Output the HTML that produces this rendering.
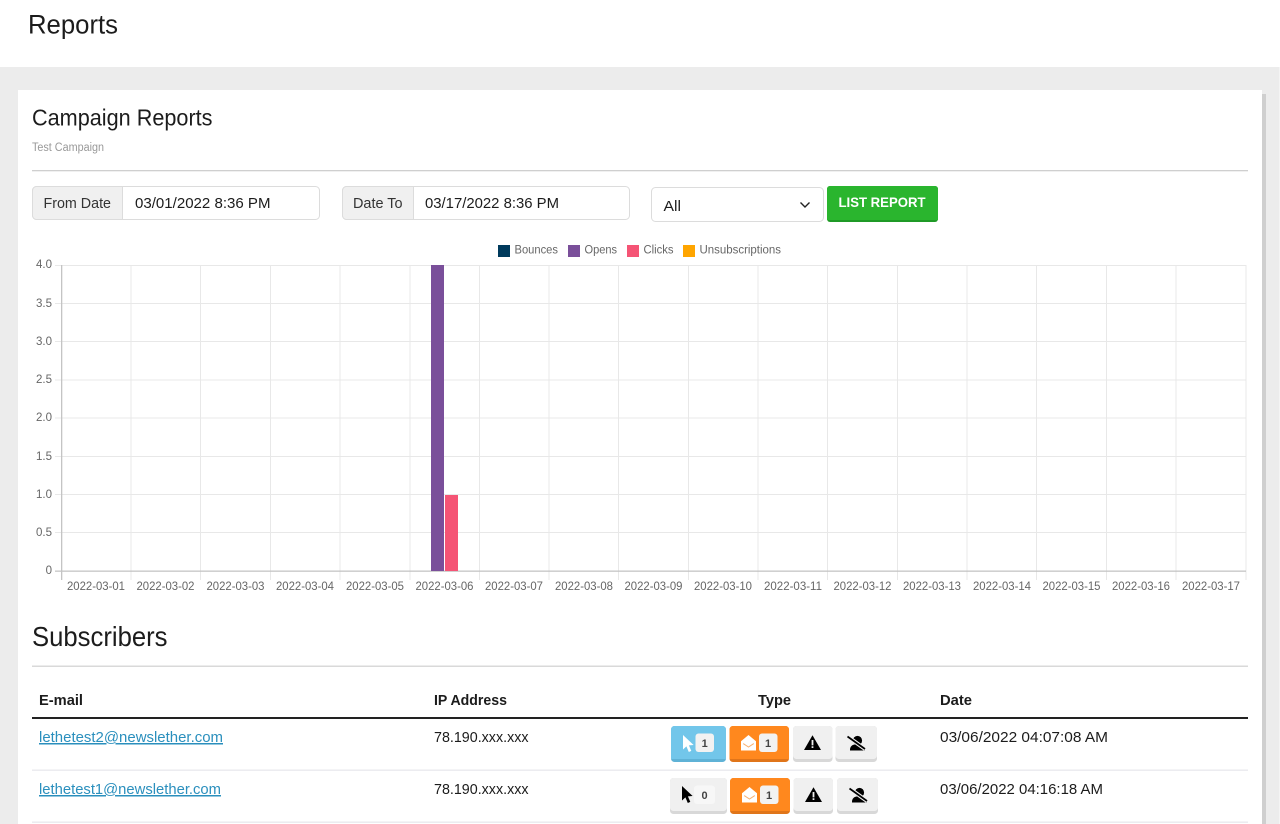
<!DOCTYPE html>
<html lang="en"><head><meta charset="utf-8"><title>Reports</title>
<style>
html,body{margin:0;padding:0;background:#ececec;width:1280px;height:824px;overflow:hidden}
svg{display:block}
text{font-family:"Liberation Sans",sans-serif;fill:#1c1c1c}
.b{font-weight:700}
.g line{stroke:#e8e8e8;stroke-width:1}
.x text{font-size:12px;fill:#666}
.y text{font-size:11.5px;fill:#666;text-anchor:end}
.l text{font-size:11.5px;fill:#666}
a text{fill:#2a8fbd;text-decoration:underline}
.n{font-size:11px;font-weight:700;fill:#444;text-anchor:middle}
</style></head><body>
<svg width="1280" height="824" viewBox="0 0 1280 824" xmlns="http://www.w3.org/2000/svg">
<defs>
<path id="cur" d="M0 0V14.5L3.400 11.400L5.800 17L8.300 15.900L5.900 10.400L10.600 10Z"/>
<g id="env"><path d="M0 6.200L7.500 0L15 6.200V15.500H0Z" fill="#fff"/><path d="M2.200 8.600L7.500 12L12.800 8.600" fill="none" stroke="#f8b070" stroke-width="1"/></g>
<path id="warn" d="M8.500 0.300L17 15H0ZM7.600 5V10.400H9.400V5ZM7.600 11.300V13H9.400V11.300Z" fill-rule="evenodd"/>
<g id="usr"><circle cx="10.500" cy="5.500" r="4.600"/><path d="M3 15.500V14.500C3 11.500 5.500 9.500 8 9.500H13C15.500 9.500 17.500 11.500 17.500 14.500V15.500Z"/><path d="M0.500 1.500L18 14" stroke="#f0f0f0" stroke-width="4"/><path d="M0.500 1.500L18 14" stroke="#000" stroke-width="1.700"/></g>
</defs>

<rect width="1280" height="67" fill="#fff"/>
<rect x="1279" y="67" width="1" height="757" fill="#f4f4f4"/>
<rect x="1262" y="94" width="4" height="730" fill="#cfcfcf"/>
<rect x="18" y="90" width="1244" height="734" fill="#fff"/>

<text x="28" y="33.500" font-size="27" textLength="90" lengthAdjust="spacingAndGlyphs">Reports</text>
<text x="32" y="125.500" font-size="23" textLength="180.500" lengthAdjust="spacingAndGlyphs">Campaign Reports</text>
<text x="32" y="151" font-size="11.500" style="fill:#999" textLength="72" lengthAdjust="spacingAndGlyphs">Test Campaign</text>
<rect x="32" y="170" width="1216" height="1.300" fill="#cfcfcf"/>

<!-- date inputs -->
<rect x="32.500" y="186.500" width="287" height="33" rx="4" fill="#fff" stroke="#dcdcdc"/>
<path d="M122.500 186.500H36.500a4 4 0 0 0-4 4v25a4 4 0 0 0 4 4H122.500Z" fill="#f0f0f0" stroke="#dcdcdc"/>
<text x="43.500" y="208" font-size="15" style="fill:#333" textLength="67.500" lengthAdjust="spacingAndGlyphs">From Date</text>
<text x="135" y="208" font-size="15" textLength="135.500" lengthAdjust="spacingAndGlyphs">03/01/2022 8:36 PM</text>

<rect x="342.500" y="186.500" width="287" height="33" rx="4" fill="#fff" stroke="#dcdcdc"/>
<path d="M413.500 186.500H346.500a4 4 0 0 0-4 4v25a4 4 0 0 0 4 4H413.500Z" fill="#f0f0f0" stroke="#dcdcdc"/>
<text x="353" y="208" font-size="15" style="fill:#333" textLength="49.500" lengthAdjust="spacingAndGlyphs">Date To</text>
<text x="425" y="208" font-size="15" textLength="134" lengthAdjust="spacingAndGlyphs">03/17/2022 8:36 PM</text>

<!-- select -->
<rect x="651.500" y="187.500" width="172" height="34" rx="4" fill="#fff" stroke="#dcdcdc"/>
<text x="663.500" y="211" font-size="15" textLength="17.500" lengthAdjust="spacingAndGlyphs">All</text>
<path d="M800.500 202.500L805 207L809.500 202.500" fill="none" stroke="#222" stroke-width="1.400"/>

<!-- button -->
<rect x="827" y="186" width="111" height="36" rx="3" fill="#1f9a26"/>
<path d="M827 189a3 3 0 0 1 3-3h105a3 3 0 0 1 3 3v31H827Z" fill="#2ab52e"/>
<text x="838.500" y="207" font-size="14" class="b" style="fill:#fff" textLength="87" lengthAdjust="spacingAndGlyphs">LIST REPORT</text>

<!-- legend -->
<g class="l">
<rect x="498" y="245" width="12" height="12" fill="#003a5c"/><text x="514.500" y="253.500" textLength="43.500" lengthAdjust="spacingAndGlyphs">Bounces</text>
<rect x="568" y="245" width="12" height="12" fill="#7a4f9a"/><text x="584.500" y="253.500" textLength="32.500" lengthAdjust="spacingAndGlyphs">Opens</text>
<rect x="627" y="245" width="12" height="12" fill="#f55475"/><text x="643.500" y="253.500" textLength="30" lengthAdjust="spacingAndGlyphs">Clicks</text>
<rect x="683" y="245" width="12" height="12" fill="#ffa500"/><text x="699.500" y="253.500" textLength="81.500" lengthAdjust="spacingAndGlyphs">Unsubscriptions</text>
</g>

<!-- grid -->
<g class="g">
<line x1="55" x2="1246" y1="265.500" y2="265.500"/><line x1="55" x2="1246" y1="303.500" y2="303.500"/><line x1="55" x2="1246" y1="341.500" y2="341.500"/><line x1="55" x2="1246" y1="380" y2="380"/><line x1="55" x2="1246" y1="418" y2="418"/><line x1="55" x2="1246" y1="456.500" y2="456.500"/><line x1="55" x2="1246" y1="494.500" y2="494.500"/><line x1="55" x2="1246" y1="532.500" y2="532.500"/>
<line x1="131" x2="131" y1="265" y2="580"/><line x1="200.500" x2="200.500" y1="265" y2="580"/><line x1="270.500" x2="270.500" y1="265" y2="580"/><line x1="340" x2="340" y1="265" y2="580"/><line x1="410" x2="410" y1="265" y2="580"/><line x1="479.500" x2="479.500" y1="265" y2="580"/><line x1="549" x2="549" y1="265" y2="580"/><line x1="618.500" x2="618.500" y1="265" y2="580"/><line x1="688.500" x2="688.500" y1="265" y2="580"/><line x1="758" x2="758" y1="265" y2="580"/><line x1="827.500" x2="827.500" y1="265" y2="580"/><line x1="897.500" x2="897.500" y1="265" y2="580"/><line x1="967" x2="967" y1="265" y2="580"/><line x1="1036.500" x2="1036.500" y1="265" y2="580"/><line x1="1106.500" x2="1106.500" y1="265" y2="580"/><line x1="1176" x2="1176" y1="265" y2="580"/><line x1="1246" x2="1246" y1="265" y2="580"/>
</g>
<rect x="61" y="265" width="1.300" height="315" fill="#c4c4c4"/>
<rect x="55" y="570.500" width="1191" height="1.300" fill="#c4c4c4"/>
<rect x="431" y="265" width="13" height="306" fill="#7a4f9a"/>
<rect x="445" y="495" width="13" height="76" fill="#f55475"/>

<g class="y">
<text x="52" y="268">4.0</text><text x="52" y="307">3.5</text><text x="52" y="345">3.0</text><text x="52" y="383">2.5</text><text x="52" y="421">2.0</text><text x="52" y="460">1.5</text><text x="52" y="498">1.0</text><text x="52" y="536">0.5</text><text x="52" y="574">0</text>
</g>
<g class="x">
<text x="67" y="590" textLength="58" lengthAdjust="spacingAndGlyphs">2022-03-01</text><text x="136.500" y="590" textLength="58" lengthAdjust="spacingAndGlyphs">2022-03-02</text><text x="206.500" y="590" textLength="58" lengthAdjust="spacingAndGlyphs">2022-03-03</text><text x="276" y="590" textLength="58" lengthAdjust="spacingAndGlyphs">2022-03-04</text><text x="346" y="590" textLength="58" lengthAdjust="spacingAndGlyphs">2022-03-05</text><text x="415.500" y="590" textLength="58" lengthAdjust="spacingAndGlyphs">2022-03-06</text><text x="485" y="590" textLength="58" lengthAdjust="spacingAndGlyphs">2022-03-07</text><text x="555" y="590" textLength="58" lengthAdjust="spacingAndGlyphs">2022-03-08</text><text x="624.500" y="590" textLength="58" lengthAdjust="spacingAndGlyphs">2022-03-09</text><text x="694" y="590" textLength="58" lengthAdjust="spacingAndGlyphs">2022-03-10</text><text x="764" y="590" textLength="58" lengthAdjust="spacingAndGlyphs">2022-03-11</text><text x="833.500" y="590" textLength="58" lengthAdjust="spacingAndGlyphs">2022-03-12</text><text x="903" y="590" textLength="58" lengthAdjust="spacingAndGlyphs">2022-03-13</text><text x="973" y="590" textLength="58" lengthAdjust="spacingAndGlyphs">2022-03-14</text><text x="1042.500" y="590" textLength="58" lengthAdjust="spacingAndGlyphs">2022-03-15</text><text x="1112" y="590" textLength="58" lengthAdjust="spacingAndGlyphs">2022-03-16</text><text x="1182" y="590" textLength="58" lengthAdjust="spacingAndGlyphs">2022-03-17</text>
</g>

<!-- subscribers -->
<text x="32" y="646" font-size="28" textLength="135.500" lengthAdjust="spacingAndGlyphs">Subscribers</text>
<rect x="32" y="665.500" width="1216" height="1.500" fill="#d9d9d9"/>

<g font-size="15" class="b">
<text x="39" y="705" textLength="44" lengthAdjust="spacingAndGlyphs">E-mail</text>
<text x="434" y="705" textLength="73" lengthAdjust="spacingAndGlyphs">IP Address</text>
<text x="758" y="705" textLength="33" lengthAdjust="spacingAndGlyphs">Type</text>
<text x="940" y="705" textLength="32" lengthAdjust="spacingAndGlyphs">Date</text>
</g>
<rect x="32" y="717" width="1216" height="2" fill="#222"/>

<a href="#"><text x="39" y="742" font-size="15" textLength="184" lengthAdjust="spacingAndGlyphs">lethetest2@newslether.com</text></a>
<text x="434" y="742" font-size="15" textLength="94.500" lengthAdjust="spacingAndGlyphs">78.190.xxx.xxx</text>
<text x="940" y="742" font-size="15" textLength="168" lengthAdjust="spacingAndGlyphs">03/06/2022 04:07:08 AM</text>
<rect x="32" y="769.500" width="1216" height="1.300" fill="#e8e8ec"/>

<a href="#"><text x="39" y="794" font-size="15" textLength="182" lengthAdjust="spacingAndGlyphs">lethetest1@newslether.com</text></a>
<text x="434" y="794" font-size="15" textLength="94.500" lengthAdjust="spacingAndGlyphs">78.190.xxx.xxx</text>
<text x="940" y="794" font-size="15" textLength="163" lengthAdjust="spacingAndGlyphs">03/06/2022 04:16:18 AM</text>
<rect x="32" y="821.500" width="1216" height="1.300" fill="#e8e8ec"/>

<!-- row 1 buttons -->
<rect x="671" y="726" width="55" height="36" rx="3.500" fill="#5fb2d6"/><path d="M671 729.500a3.500 3.500 0 0 1 3.500-3.500h48a3.500 3.500 0 0 1 3.500 3.500V759H671Z" fill="#72c6ea"/>
<use href="#cur" x="683" y="735" fill="#fff"/>
<rect x="695.500" y="733.500" width="18.500" height="18.500" rx="3" fill="#f2f2f2"/><text class="n" x="704.700" y="746.800">1</text>

<rect x="729.500" y="726" width="59.500" height="36" rx="3.500" fill="#e0751a"/><path d="M729.500 729.500a3.500 3.500 0 0 1 3.500-3.500h52.500a3.500 3.500 0 0 1 3.500 3.500V759H729.500Z" fill="#ff881e"/>
<use href="#env" x="741" y="735"/>
<rect x="759" y="733.500" width="18.500" height="18.500" rx="3" fill="#f2f2f2"/><text class="n" x="768" y="746.800">1</text>

<rect x="793" y="726" width="39.500" height="36" rx="3.500" fill="#d8d8d8"/><rect x="793" y="726" width="39.500" height="33" rx="3.500" fill="#f0f0f0"/>
<use href="#warn" x="804" y="735"/>
<rect x="835.500" y="726" width="41.500" height="36" rx="3.500" fill="#d8d8d8"/><rect x="835.500" y="726" width="41.500" height="33" rx="3.500" fill="#f0f0f0"/>
<use href="#usr" x="847" y="735"/>

<!-- row 2 buttons -->
<rect x="670" y="778" width="57" height="36" rx="3.500" fill="#d8d8d8"/><rect x="670" y="778" width="57" height="33" rx="3.500" fill="#f0f0f0"/>
<use href="#cur" x="682" y="786" fill="#000"/>
<rect x="694" y="785.500" width="21" height="18.500" rx="3" fill="#f7f7f7"/><text class="n" x="704.500" y="798.800">0</text>

<rect x="730" y="778" width="60" height="36" rx="3.500" fill="#e0751a"/><path d="M730 781.500a3.500 3.500 0 0 1 3.500-3.500h53a3.500 3.500 0 0 1 3.500 3.500V811H730Z" fill="#ff881e"/>
<use href="#env" x="742" y="787"/>
<rect x="760" y="785.500" width="18.500" height="18.500" rx="3" fill="#f2f2f2"/><text class="n" x="769" y="798.800">1</text>

<rect x="793.500" y="778" width="39.500" height="36" rx="3.500" fill="#d8d8d8"/><rect x="793.500" y="778" width="39.500" height="33" rx="3.500" fill="#f0f0f0"/>
<use href="#warn" x="805" y="787"/>
<rect x="837" y="778" width="41" height="36" rx="3.500" fill="#d8d8d8"/><rect x="837" y="778" width="41" height="33" rx="3.500" fill="#f0f0f0"/>
<use href="#usr" x="849" y="787"/>
</svg>
</body></html>
